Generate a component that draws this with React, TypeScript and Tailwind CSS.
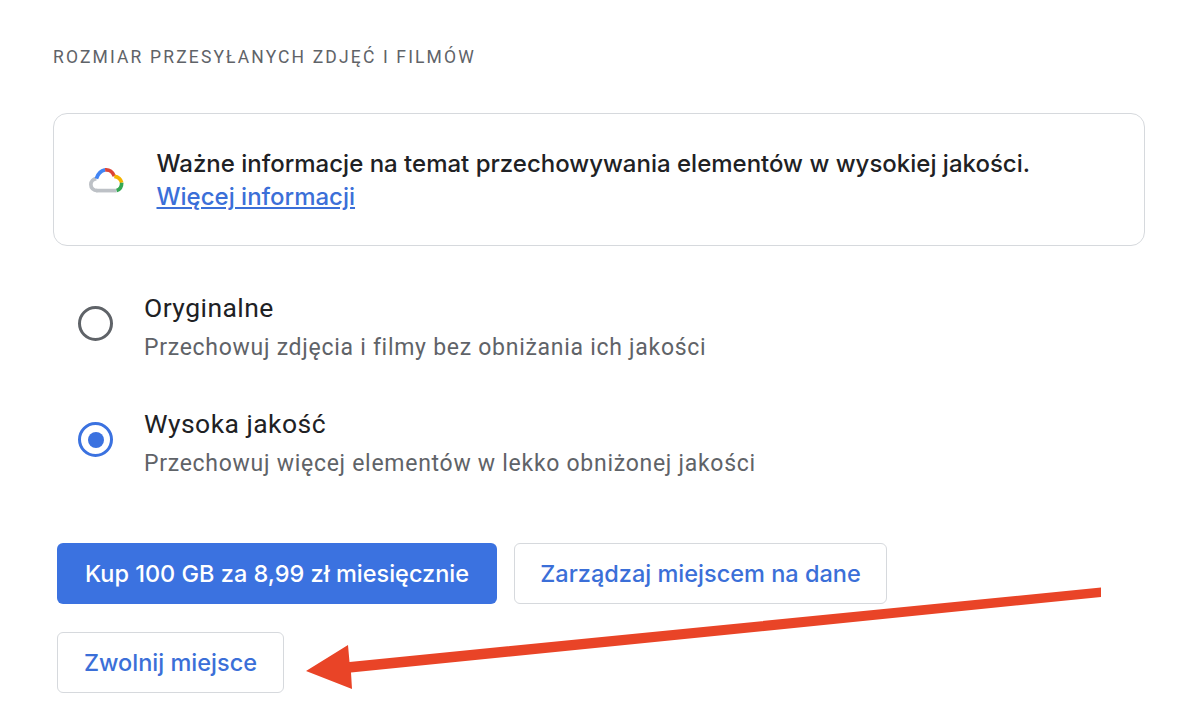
const sans = "font-['Roboto',sans-serif]";
const display = "font-['Inter',sans-serif]";

const RadioOption = ({
  title,
  subtitle,
  checked,
}: {
  title: string;
  subtitle: string;
  checked?: boolean;
}) => (
  <div className="flex items-start">
    <div
      className={`mt-[15px] ml-[25px] flex h-[35px] w-[35px] items-center justify-center rounded-full border-[3.5px] ${
        checked ? "border-[#3b72e0]" : "border-[#5f6368]"
      }`}
    >
      {checked && <div className="h-[16px] w-[16px] rounded-full bg-[#3b72e0]" />}
    </div>
    <div className="ml-[31px]">
      <div className={`${sans} -mt-px text-[26.5px] leading-[36px] tracking-[0.45px] text-[#202124]`}>{title}</div>
      <div className={`${sans} mt-[7px] text-[23px] leading-[30px] tracking-[0.72px] text-[#5f6368]`}>{subtitle}</div>
    </div>
  </div>
);

const OutlineButton = ({ label, width }: { label: string; width: string }) => (
  <button
    className={`${display} ${width} h-[61px] rounded-[6px] border-[1.5px] border-[#d6d9dd] bg-white text-[23.5px] font-medium text-[#3b6fd8]`}
  >
    {label}
  </button>
);

export default function App() {
  return (
    <div className="relative h-[712px] w-[1200px] overflow-hidden bg-white">
      <div className="px-[53px] pt-[46px]">
        <div className={`${sans} text-[17.5px] leading-[22px] tracking-[2.15px] text-[#5f6368]`}>
          ROZMIAR PRZESYŁANYCH ZDJĘĆ I FILMÓW
        </div>

        <div className="mt-[45px] flex h-[133px] w-[1092px] items-center rounded-[14px] border-[1.5px] border-[#d6d9dd]">
          <svg className="ml-[35px] h-[26px] w-[35px] shrink-0" viewBox="0 0 38 28" fill="none" strokeWidth="4" strokeLinecap="butt">
            <path d="M9 25.5 C4.5 25.5 2 22.5 2 19 C2 15.5 4.5 13 8 12.5" stroke="#bdc1c6" />
            <path d="M8 25.5 H30" stroke="#bdc1c6" />
            <path d="M8 12.5 C9.5 7.5 12.5 4 17.5 3" stroke="#4285f4" />
            <path d="M17.5 3 C22 2.5 26 5 27.5 10" stroke="#db4437" />
            <path d="M27.5 10 C31.5 10.5 34.5 13 35.5 17" stroke="#f4b400" />
            <path d="M35.5 17 C35.5 21 33.5 24.5 30 25.5" stroke="#34a853" />
          </svg>
          <div className="ml-[32.5px]">
            <div className={`${display} text-[24px] leading-[33px] font-medium text-[#202124]`}>
              Ważne informacje na temat przechowywania elementów w wysokiej jakości.
            </div>
            <a className={`${display} block text-[24px] leading-[33px] font-medium text-[#3b6fd8] underline`}>
              Więcej informacji
            </a>
          </div>
        </div>

        <div className="mt-[45px] flex flex-col gap-[44px]">
          <RadioOption title="Oryginalne" subtitle="Przechowuj zdjęcia i filmy bez obniżania ich jakości" />
          <RadioOption title="Wysoka jakość" subtitle="Przechowuj więcej elementów w lekko obniżonej jakości" checked />
        </div>

        <div className="mt-[64px] ml-[4px] flex flex-col gap-[28px]">
          <div className="flex gap-[17px]">
            <button
              className={`${display} h-[61px] w-[440px] rounded-[6px] bg-[#3b72e0] text-[23.5px] font-medium text-white`}
            >
              Kup 100 GB za 8,99 zł miesięcznie
            </button>
            <OutlineButton label="Zarządzaj miejscem na dane" width="w-[373px]" />
          </div>
          <OutlineButton label="Zwolnij miejsce" width="w-[227px]" />
        </div>
      </div>

      <svg className="absolute top-0 left-0 h-[712px] w-[1200px]" viewBox="0 0 1200 712">
        <path d="M1101 587.5 L1101 597 L351 672.5 L352 689 L306 671 L348 645 L349.5 662 Z" fill="#e94427" />
      </svg>
    </div>
  );
}
